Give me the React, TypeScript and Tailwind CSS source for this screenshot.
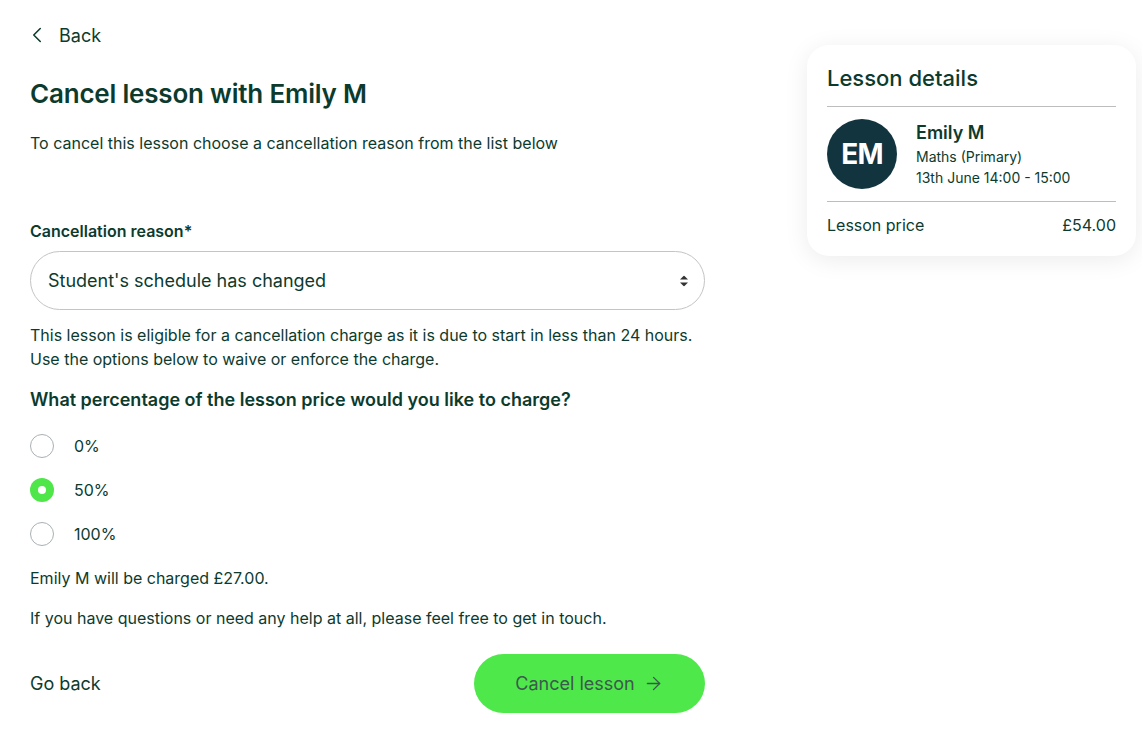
import { ChevronLeft, ArrowRight } from "lucide-react";

const reasons = [
  "Student's schedule has changed",
  "Tutor is unavailable",
  "Student is unwell",
  "Other",
];

const charges = ["0%", "50%", "100%"];

function Radio({ label, checked }: { label: string; checked?: boolean }) {
  return (
    <label className="flex items-center gap-5 h-[44px]">
      {checked ? (
        <span className="w-6 h-6 rounded-full bg-[#4fe64a] flex items-center justify-center">
          <span className="w-2 h-2 rounded-full bg-white" />
        </span>
      ) : (
        <span className="w-6 h-6 rounded-full border border-[#a9b0b4] bg-white" />
      )}
      <span className="text-[16px]">{label}</span>
    </label>
  );
}

function LessonCard() {
  return (
    <div className="w-[329px] rounded-[22px] bg-white px-5 pt-[19px] pb-[19px] shadow-[0_4px_24px_rgba(0,0,0,0.08)]">
      <h2 className="text-[22px] font-medium leading-[28px] pb-[14px] border-b border-[#bdbdbd]">
        Lesson details
      </h2>
      <div className="flex items-center gap-[19px] py-3 border-b border-[#bdbdbd]">
        <div className="w-[70px] h-[70px] rounded-full bg-[#12343f] flex items-center justify-center text-white text-[28px] font-bold tracking-tight">
          EM
        </div>
        <div className="flex flex-col">
          <span className="text-[18px] font-semibold leading-[24px]">Emily M</span>
          <span className="text-[14px] leading-[21px] mt-[1px]">Maths (Primary)</span>
          <span className="text-[14px] leading-[21px]">13th June 14:00 - 15:00</span>
        </div>
      </div>
      <div className="flex justify-between items-center pt-[11px] text-[16px] leading-[24px]">
        <span>Lesson price</span>
        <span>£54.00</span>
      </div>
    </div>
  );
}

export default function App() {
  return (
    <div
      className="min-h-screen bg-white text-[#0c3b2e] flex justify-between pl-[30px] pr-[6px]"
      style={{ fontFamily: "Inter, 'Noto Sans', sans-serif" }}
    >
      <main className="w-[675px] flex flex-col">
        <button className="flex items-center gap-[9px] mt-[22px] h-[26px] text-[18px] -ml-[6px]">
          <ChevronLeft size={26} strokeWidth={1.4} />
          Back
        </button>

        <h1 className="text-[26px] font-semibold mt-[28px] leading-[36px] tracking-[-0.2px]">
          Cancel lesson with Emily M
        </h1>
        <p className="text-[16px] mt-[19px] leading-[24px]">
          To cancel this lesson choose a cancellation reason from the list below
        </p>

        <label className="text-[16px] font-semibold mt-[64px] leading-[24px]">
          Cancellation reason*
        </label>
        <div className="relative mt-[8px]">
          <select
            defaultValue={reasons[0]}
            className="w-full h-[59px] appearance-none rounded-full border border-[#c4c4c4] bg-white px-[17px] text-[18px] text-[#0c3b2e] outline-none"
          >
            {reasons.map((r) => (
              <option key={r}>{r}</option>
            ))}
          </select>
          <svg
            className="absolute right-[17px] top-1/2 -translate-y-1/2 pointer-events-none"
            width="8"
            height="11"
            viewBox="0 0 8 11"
          >
            <path d="M4 0 L8 4 H0 Z" fill="#333" />
            <path d="M4 11 L8 7 H0 Z" fill="#333" />
          </svg>
        </div>

        <p className="text-[16px] leading-[24px] mt-[13px]">
          This lesson is eligible for a cancellation charge as it is due to start in less than 24 hours.
          <br />
          Use the options below to waive or enforce the charge.
        </p>

        <h3 className="text-[18px] font-semibold leading-[26px] mt-[16px]">
          What percentage of the lesson price would you like to charge?
        </h3>

        <div className="flex flex-col mt-[11px]">
          {charges.map((c) => (
            <Radio key={c} label={c} checked={c === "50%"} />
          ))}
        </div>

        <p className="text-[16px] leading-[24px] mt-[10px]">Emily M will be charged £27.00.</p>
        <p className="text-[16px] leading-[24px] mt-[16px]">
          If you have questions or need any help at all, please feel free to get in touch.
        </p>

        <div className="flex items-center justify-between mt-[24px]">
          <button className="text-[18px]">Go back</button>
          <button className="w-[231px] h-[59px] rounded-full bg-[#4fe84a] text-[#3b5a4d] text-[18px] flex items-center justify-center gap-[8px]">
            Cancel lesson
            <ArrowRight size={21} strokeWidth={1.5} />
          </button>
        </div>
      </main>

      <aside className="pt-[45px]">
        <LessonCard />
      </aside>
    </div>
  );
}
